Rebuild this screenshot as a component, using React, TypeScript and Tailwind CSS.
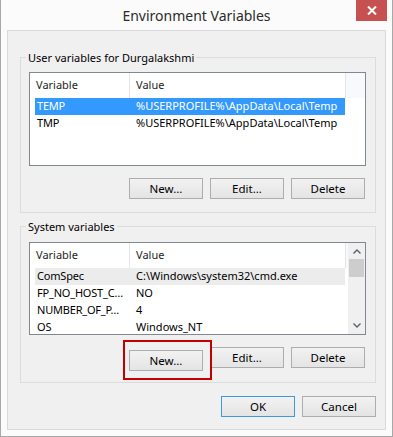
import React from "react";

type Row = [string, string];

const userVars: Row[] = [
  ["TEMP", "%USERPROFILE%\\AppData\\Local\\Temp"],
  ["TMP", "%USERPROFILE%\\AppData\\Local\\Temp"],
];

const systemVars: Row[] = [
  ["ComSpec", "C:\\Windows\\system32\\cmd.exe"],
  ["FP_NO_HOST_C…", "NO"],
  ["NUMBER_OF_P…", "4"],
  ["OS", "Windows_NT"],
];

function Btn({ children, primary }: { children: React.ReactNode; primary?: boolean }) {
  return (
    <button
      className={
        "h-[21px] w-[74px] border bg-linear-to-b from-[#f2f2f2] to-[#e4e4e4] text-[11.5px] leading-none text-black " +
        (primary ? "border-[#3c9be0]" : "border-[#adadad]")
      }
    >
      {children}
    </button>
  );
}

function Chevron({ down }: { down?: boolean }) {
  return (
    <svg width="8" height="5" viewBox="0 0 8 5" className="text-[#606060]">
      <polyline
        points={down ? "0.5,0.5 4,4 7.5,0.5" : "0.5,4.5 4,1 7.5,4.5"}
        fill="none"
        stroke="currentColor"
        strokeWidth="1.4"
      />
    </svg>
  );
}

function ListView({
  rows,
  height,
  active,
  scroll,
}: {
  rows: Row[];
  height: string;
  active: "blue" | "gray";
  scroll?: boolean;
}) {
  return (
    <div className={`flex w-[337px] ${height} overflow-hidden border border-[#828790] bg-white`}>
      <div className="flex min-w-0 flex-1 flex-col">
        <div className="flex h-[25px] shrink-0 items-center text-[11px] text-[#1e1e1e]">
          <div className="flex h-full w-[99px] shrink-0 items-center pl-[6px]">Variable</div>
          <div className="h-full w-px shrink-0 bg-[#e5e5e5]" />
          <div className="flex h-full w-[215px] shrink-0 items-center pl-[6px]">Value</div>
          <div className="h-full w-px shrink-0 bg-[#e5e5e5]" />
          <div className="h-full flex-1 bg-[#f7f9fc]" />
        </div>
        {rows.map(([name, value], i) => (
          <div
            key={name}
            className={
              "ml-[5px] flex h-[17px] w-[310px] shrink-0 items-center text-[11px] " +
              (i === 0
                ? active === "blue"
                  ? "bg-[#3399ff] text-white"
                  : "bg-[#ececec] text-black"
                : "text-black")
            }
          >
            <div className="w-[94px] shrink-0 whitespace-nowrap pl-[2px] tracking-[-0.2px]">{name}</div>
            <div className="whitespace-nowrap pl-[7px]">{value}</div>
          </div>
        ))}
      </div>
      {scroll && (
        <div className="flex w-[17px] shrink-0 flex-col bg-[#f0f0f0]">
          <div className="flex h-[16px] items-center justify-center">
            <Chevron />
          </div>
          <div className="mx-px h-[18px] bg-[#cdcdcd]" />
          <div className="flex-1" />
          <div className="flex h-[17px] items-center justify-center">
            <Chevron down />
          </div>
        </div>
      )}
    </div>
  );
}

function Group({
  label,
  className,
  children,
}: {
  label: string;
  className: string;
  children: React.ReactNode;
}) {
  return (
    <div className={`relative w-[356px] border border-[#dcdcdc] pl-[8px] ${className}`}>
      <span className="absolute -top-[8px] left-[5px] bg-[#f0f0f0] px-[2px] text-[11px] leading-[15px] text-black">
        {label}
      </span>
      {children}
    </div>
  );
}

export default function App() {
  return (
    <div className="flex h-[437px] w-[393px] flex-col border-x border-b border-[#a8a8a8] bg-[#fbfbfb] font-['Noto_Sans',sans-serif]">
      <div className="relative flex h-[30px] shrink-0 items-center justify-center">
        <span className="text-[14px] text-[#2b2b2b]">Environment Variables</span>
        <div className="absolute right-[5px] top-0 flex h-[21px] w-[31px] items-center justify-center bg-[#c75050]">
          <svg width="10" height="9" viewBox="0 0 10 9">
            <path d="M1 0.5 L9 8.5 M9 0.5 L1 8.5" stroke="white" strokeWidth="2" />
          </svg>
        </div>
      </div>

      <div className="mx-[6px] flex h-[400px] flex-col border border-[#d9d9d9] bg-[#f0f0f0] pl-[12px]">
        <Group label="User variables for Durgalakshmi" className="mt-[26px] h-[156px] pt-[14px]">
          <ListView rows={userVars} height="h-[94px]" active="blue" />
          <div className="mt-[12px] flex w-[337px] justify-end gap-[7px] pr-px">
            <Btn>New...</Btn>
            <Btn>Edit...</Btn>
            <Btn>Delete</Btn>
          </div>
        </Group>

        <Group label="System variables" className="mt-[13px] h-[157px] pt-[15px]">
          <ListView rows={systemVars} height="h-[93px]" active="gray" scroll />
          <div className="mt-[12px] flex w-[337px] justify-end gap-[7px] pr-px">
            <div className="relative">
              <Btn>New...</Btn>
              <div className="pointer-events-none absolute -top-[7px] -right-[9px] -bottom-[9px] -left-[6px] border-2 border-[#c00000]" />
            </div>
            <Btn>Edit...</Btn>
            <Btn>Delete</Btn>
          </div>
        </Group>

        <div className="mt-[13px] flex w-[356px] justify-end gap-[7px]">
          <Btn primary>OK</Btn>
          <Btn>Cancel</Btn>
        </div>
      </div>
    </div>
  );
}
